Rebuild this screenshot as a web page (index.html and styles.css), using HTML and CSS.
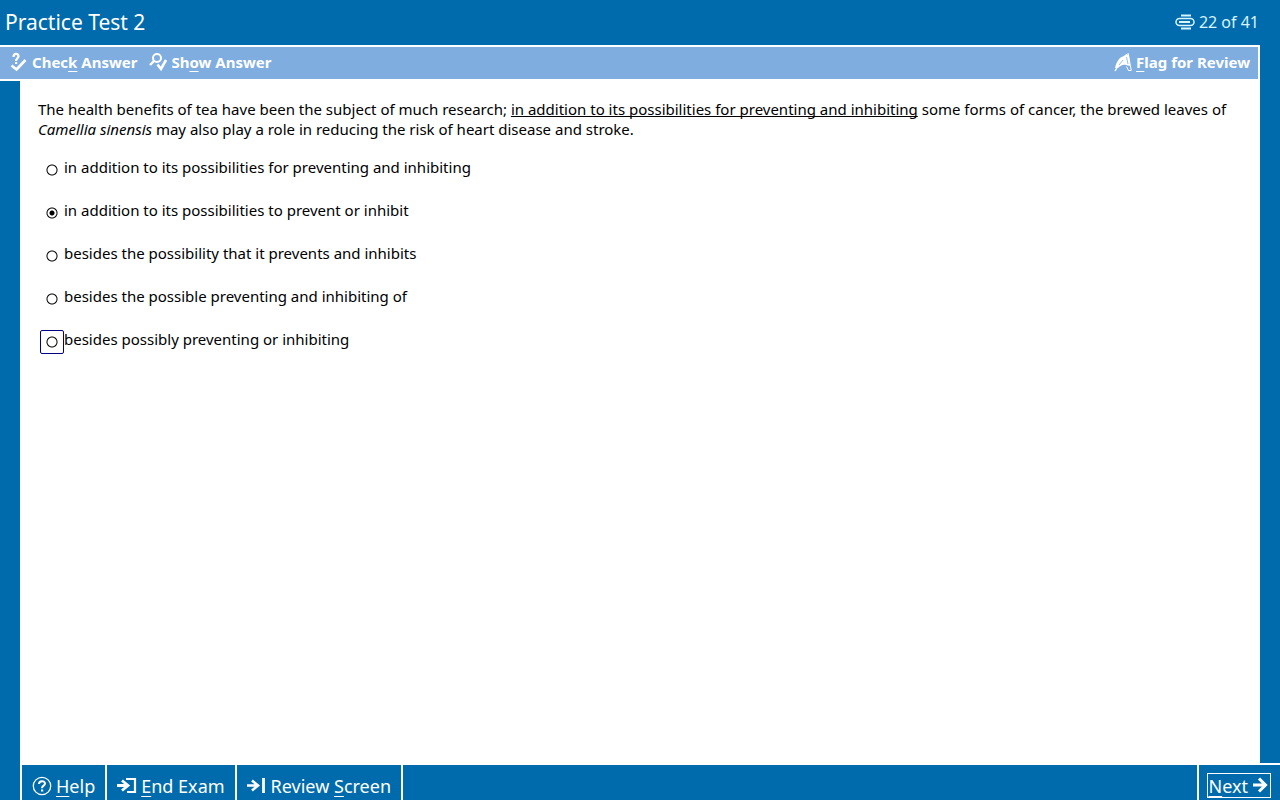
FILE: index.html
```
<!DOCTYPE html>
<html lang="en">
<head>
    <meta charset="UTF-8">
    <meta name="viewport" content="width=device-width, initial-scale=1.0">
    <title>Practice Test 2</title>
    <link rel="stylesheet" href="styles.css">
</head>
<body>
    <header class="header">
        <h1>Practice Test 2</h1>
        <div class="progress">
            <svg width="20" height="16" viewBox="0 0 20 16" fill="none" stroke="currentColor">
                <path d="M6 1.5h10M6 14.5h10" stroke-width="2"/>
                <rect x="1" y="4.5" width="18" height="7" rx="3.5" stroke-width="1.5"/>
                <path d="M4 8h11" stroke-width="2"/>
            </svg>
            <span>22 of 41</span>
        </div>
    </header>

    <div class="toolbar">
        <button type="button" class="tool">
            <svg width="18" height="20" viewBox="0 0 18 20" fill="none" stroke="currentColor">
                <path d="M3.5 5C3.5 1 8.5 1 8.5 4.2C8.5 6.4 6 6.2 6 9" stroke-width="2.2"/>
                <path d="M5 11h2.2" stroke-width="2"/>
                <path d="M1.5 13.5L6.5 17.5L15.5 8" stroke-width="2.6"/>
            </svg>
            <span>Chec<u>k</u> Answer</span>
        </button>
        <button type="button" class="tool">
            <svg width="18" height="20" viewBox="0 0 18 20" fill="none" stroke="currentColor">
                <circle cx="8" cy="6" r="4" stroke-width="2"/>
                <path d="M5 9L1 13" stroke-width="2.4"/>
                <path d="M8.5 12.5L12 17L17 8" stroke-width="2.6"/>
            </svg>
            <span>Sh<u>o</u>w Answer</span>
        </button>
        <button type="button" class="tool flag">
            <svg width="18" height="20" viewBox="0 0 18 20" fill="currentColor" stroke="currentColor">
                <path d="M1 16C2 11 4 8 6 6C8 4 10 5 12 2L15 3L16 14L12 13C9 12 6 14 4 16Z" stroke="none"/>
                <path d="M14 1L17.3 18.5M12.5 14.5L14.5 18.5H17" fill="none" stroke-width="1"/>
                <path d="M1 19L4 14" stroke-width="1.4"/>
                <path d="M12.5 5L14 12M5 13L9 8" fill="none" stroke="#80ade0" stroke-width="0.8"/>
            </svg>
            <span><u>F</u>lag for Review</span>
        </button>
    </div>

    <main class="content">
        <p class="question">The health benefits of tea have been the subject of much research; <span class="underlined">in addition to its possibilities for preventing and inhibiting</span> some forms of cancer, the brewed leaves of <em>Camellia sinensis</em> may also play a role in reducing the risk of heart disease and stroke.</p>

        <form class="answers">
            <div class="answer">
                <input type="radio" name="answer" id="a1">
                <label for="a1">in addition to its possibilities for preventing and inhibiting</label>
            </div>
            <div class="answer">
                <input type="radio" name="answer" id="a2" checked>
                <label for="a2">in addition to its possibilities to prevent or inhibit</label>
            </div>
            <div class="answer">
                <input type="radio" name="answer" id="a3">
                <label for="a3">besides the possibility that it prevents and inhibits</label>
            </div>
            <div class="answer">
                <input type="radio" name="answer" id="a4">
                <label for="a4">besides the possible preventing and inhibiting of</label>
            </div>
            <div class="answer focused">
                <input type="radio" name="answer" id="a5">
                <label for="a5">besides possibly preventing or inhibiting</label>
            </div>
        </form>
    </main>

    <footer class="footer">
        <button type="button" class="nav">
            <svg width="20" height="20" viewBox="0 0 20 20" fill="none" stroke="currentColor">
                <circle cx="10" cy="10" r="8.7" stroke-width="1.3"/>
                <path d="M7 8C7 4.3 13 4.3 13 7.5C13 9.8 10 9.5 10 12.2" stroke-width="2"/>
                <path d="M9 14.5h2.2" stroke-width="2"/>
            </svg>
            <span><u>H</u>elp</span>
        </button>
        <button type="button" class="nav">
            <svg width="20" height="20" viewBox="0 0 20 20" fill="none" stroke="currentColor">
                <path d="M0 9.5h11M5 4.5l6 5l-6 5" stroke-width="2.8"/>
                <path d="M9 3h9v13h-8" stroke-width="2.2"/>
            </svg>
            <span><u>E</u>nd Exam</span>
        </button>
        <button type="button" class="nav">
            <svg width="20" height="20" viewBox="0 0 20 20" fill="none" stroke="currentColor">
                <path d="M0 9.5h11M5 4.5l6 5l-6 5" stroke-width="2.6"/>
                <path d="M16.5 2v15" stroke-width="2.8"/>
            </svg>
            <span>Review <u>S</u>creen</span>
        </button>
        <button type="button" class="nav next">
            <span class="next-box">
                <span><u>N</u>ext</span>
                <svg width="16" height="18" viewBox="0 0 16 18" fill="none" stroke="currentColor">
                    <path d="M1 8h12M7 1.5l6.5 6.5l-6.5 6.5" stroke-width="3"/>
                </svg>
            </span>
        </button>
    </footer>
</body>
</html>
```
FILE: styles.css
```
* {
    box-sizing: border-box;
}
body {
    display: flex;
    flex-direction: column;
    min-height: 100vh;
    margin: 0;
    background-color: #006bac;
    color: #000;
    font-family: "Noto Sans", sans-serif;
    font-size: 16px;
}
button {
    display: flex;
    align-items: center;
    border: none;
    background: none;
    color: #fff;
    font-family: inherit;
    cursor: pointer;
}
u {
    text-underline-offset: 3px;
    text-decoration-thickness: 1px;
    text-decoration-skip-ink: none;
}
.header {
    display: flex;
    justify-content: space-between;
    align-items: center;
    height: 45px;
    padding: 0 21px 2px 5px;
    color: #fff;
}
.header h1 {
    margin: 0;
    font-size: 21px;
    font-weight: 400;
}
.progress {
    display: flex;
    align-items: center;
    gap: 4px;
    color: #d8f4ff;
}
.toolbar {
    display: flex;
    align-items: center;
    gap: 12px;
    height: 36px;
    margin-right: 20px;
    padding: 0 8px 2px 10px;
    border: 2px solid #fff;
    border-left: none;
    background-color: #80ade0;
}
.tool {
    gap: 4px;
    padding: 0;
    font-size: 15px;
    font-weight: 700;
}
.flag {
    margin-left: auto;
}
.content {
    flex: 1;
    margin: 0 20px;
    padding: 18px;
    background-color: #fff;
    font-size: 15px;
}
.question {
    margin: 0 0 18px;
    line-height: 20px;
}
.underlined {
    text-decoration: underline;
    text-decoration-skip-ink: none;
}
.answers {
    display: flex;
    flex-direction: column;
    gap: 18px;
    padding-left: 2px;
}
.answer {
    display: flex;
    height: 25px;
    line-height: 20px;
}
.answer input {
    appearance: none;
    flex: none;
    width: 24px;
    height: 24px;
    margin: 1px 0 0;
    border: 1px solid transparent;
    border-radius: 2px;
    background: radial-gradient(circle, transparent 4px, #000 5px, #000 5px, transparent 6px);
}
.answer input:checked {
    background: radial-gradient(circle, #000 2px, transparent 3px, transparent 4px, #000 5px, #000 5px, transparent 6px);
}
.answer.focused input {
    border-color: #000080;
}
/* the top rule runs on past the content to the window's right edge */
.footer {
    display: flex;
    height: 37px;
    margin-left: 20px;
    border-top: 2px solid #fff;
    border-left: 2px solid #fff;
}
.nav {
    gap: 4px;
    padding: 6px 10px 0;
    border-right: 2px solid #fff;
    font-size: 18px;
}
.next {
    margin-left: auto;
    padding: 6px 9px 0 8px;
    border-right: none;
    border-left: 2px solid #fff;
}
.next-box {
    display: flex;
    align-items: center;
    gap: 4px;
    height: 25px;
    padding: 0 2px 0 1px;
    border: 1px solid #fff;
}
```
